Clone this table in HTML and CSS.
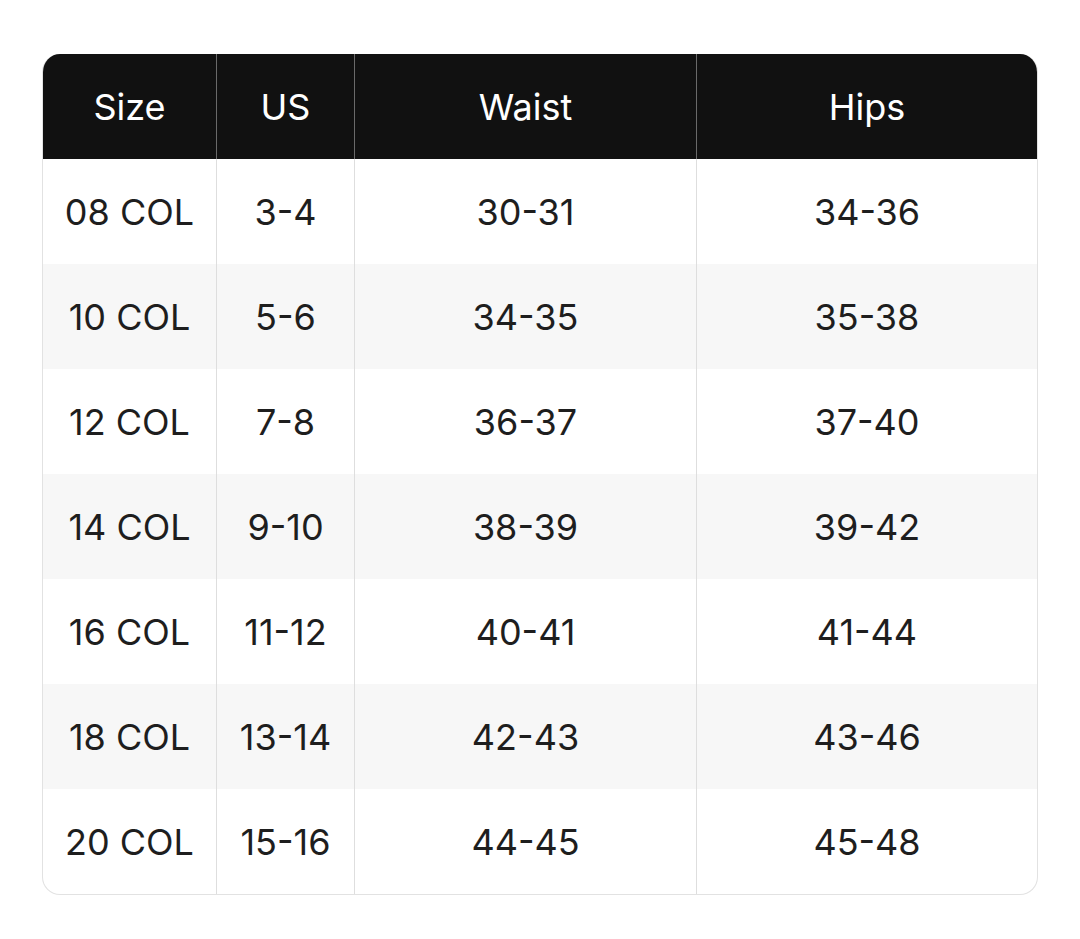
FILE: index.html
```html
<!DOCTYPE html>
<html>
<head>
<meta charset="utf-8">
<link rel="stylesheet" href="styles.css">
</head>
<body>
<div class="wrap">
<table class="chart">
<colgroup>
<col class="c1"><col class="c2"><col class="c3"><col class="c4">
</colgroup>
<thead>
<tr><th>Size</th><th>US</th><th>Waist</th><th>Hips</th></tr>
</thead>
<tbody>
<tr><td>08 COL</td><td>3-4</td><td>30-31</td><td>34-36</td></tr>
<tr><td>10 COL</td><td>5-6</td><td>34-35</td><td>35-38</td></tr>
<tr><td>12 COL</td><td>7-8</td><td>36-37</td><td>37-40</td></tr>
<tr><td>14 COL</td><td>9-10</td><td>38-39</td><td>39-42</td></tr>
<tr><td>16 COL</td><td>11-12</td><td>40-41</td><td>41-44</td></tr>
<tr><td>18 COL</td><td>13-14</td><td>42-43</td><td>43-46</td></tr>
<tr><td>20 COL</td><td>15-16</td><td>44-45</td><td>45-48</td></tr>
</tbody>
</table>
</div>
</body>
</html>
```
FILE: styles.css
```css
html, body {
  margin: 0;
  padding: 0;
  background: #ffffff;
}
body {
  font-family: Inter, "Noto Sans", sans-serif;
  color: #1e1e1e;
}
.wrap {
  padding: 54px 42px 0 42px;
}
.chart {
  width: 996px;
  border-collapse: separate;
  border-spacing: 0;
  table-layout: fixed;
  border: 1px solid #e2e2e2;
  border-top: none;
  border-radius: 18px;
  overflow: hidden;
}
.c1 { width: 173px; }
.c2 { width: 138px; }
.c3 { width: 342px; }
.c4 { width: 341px; }
.chart th, .chart td {
  text-align: center;
  vertical-align: middle;
  height: 105px;
  padding: 0;
  font-size: 36px;
  font-weight: 400;
  border-left: 1px solid #dedede;
}
.chart th:first-child, .chart td:first-child {
  border-left: none;
}
.chart th {
  background: #111111;
  color: #ffffff;
  border-left-color: #6a6a6a;
}
.chart tbody tr:nth-child(even) td {
  background: #f7f7f7;
}
```
